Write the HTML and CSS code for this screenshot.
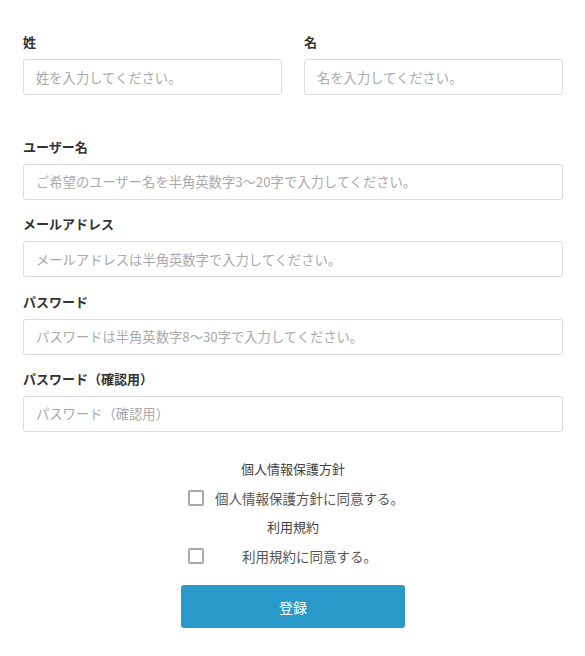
FILE: index.html
```html
<!DOCTYPE html>
<html lang="ja">
<head>
<meta charset="utf-8">
<title>登録</title>
<link rel="stylesheet" href="styles.css">
</head>
<body>
<form class="form">
  <div class="name-row">
    <div class="field">
      <label class="label">姓</label>
      <input class="input" type="text" placeholder="姓を入力してください。">
    </div>
    <div class="field">
      <label class="label">名</label>
      <input class="input" type="text" placeholder="名を入力してください。">
    </div>
  </div>
  <div class="field">
    <label class="label">ユーザー名</label>
    <input class="input" type="text" placeholder="ご希望のユーザー名を半角英数字3〜20字で入力してください。">
  </div>
  <div class="field">
    <label class="label">メールアドレス</label>
    <input class="input" type="text" placeholder="メールアドレスは半角英数字で入力してください。">
  </div>
  <div class="field">
    <label class="label">パスワード</label>
    <input class="input" type="password" placeholder="パスワードは半角英数字8〜30字で入力してください。">
  </div>
  <div class="field">
    <label class="label">パスワード（確認用）</label>
    <input class="input" type="password" placeholder="パスワード（確認用）">
  </div>
  <div class="agree">
    <div class="agree-title">個人情報保護方針</div>
    <label class="check-row"><input class="check" type="checkbox"><span class="check-text">個人情報保護方針に同意する。</span></label>
    <div class="agree-title">利用規約</div>
    <label class="check-row"><input class="check" type="checkbox"><span class="check-text">利用規約に同意する。</span></label>
  </div>
  <button class="submit" type="button">登録</button>
</form>
</body>
</html>
```

FILE: styles.css
```css
* { box-sizing: border-box; }
body {
  margin: 0;
  background: #fff;
  font-family: "Noto Sans CJK JP", "Noto Sans", sans-serif;
  color: #333;
}
.form {
  padding: 32px 22px 0 23px;
  display: flex;
  flex-direction: column;
}
.name-row {
  display: grid;
  grid-template-columns: 1fr 1fr;
  column-gap: 22px;
  margin-bottom: 27.667px;
}
.field {
  display: flex;
  flex-direction: column;
  margin-bottom: 14.333px;
}
.label {
  font-size: 13px;
  font-weight: 700;
  line-height: 20px;
  margin-bottom: 7px;
  color: #333;
}
.input {
  height: 36px;
  border: 1px solid #dcdcdc;
  border-radius: 3px;
  padding: 0 12px;
  font-family: inherit;
  font-size: 13.3px;
  color: #333;
  outline: none;
}
.input::placeholder { color: #aaa; }
.agree {
  margin-top: 13px;
  display: flex;
  flex-direction: column;
  align-items: center;
  gap: 9px;
}
.agree-title {
  font-size: 13px;
  line-height: 20px;
  color: #444;
}
.check-row {
  width: 224px;
  display: flex;
  align-items: center;
  padding: 0 1px 0 7px;
  height: 20px;
  gap: 4px;
  font-size: 13.5px;
  color: #555;
}
.check {
  appearance: none;
  -webkit-appearance: none;
  margin: 0;
  width: 16px;
  height: 16px;
  border: 2px solid #a8a8a8;
  border-radius: 2px;
  background: #fff;
  flex: none;
}
.check-text {
  flex: 1;
  padding-left: 7px;
  text-align: center;
  line-height: 20px;
  white-space: nowrap;
}
.submit {
  align-self: center;
  margin-top: 19px;
  width: 224px;
  height: 43px;
  border: none;
  border-radius: 3px;
  background: #2899c8;
  color: #fff;
  font-family: inherit;
  font-size: 14px;
}
```
